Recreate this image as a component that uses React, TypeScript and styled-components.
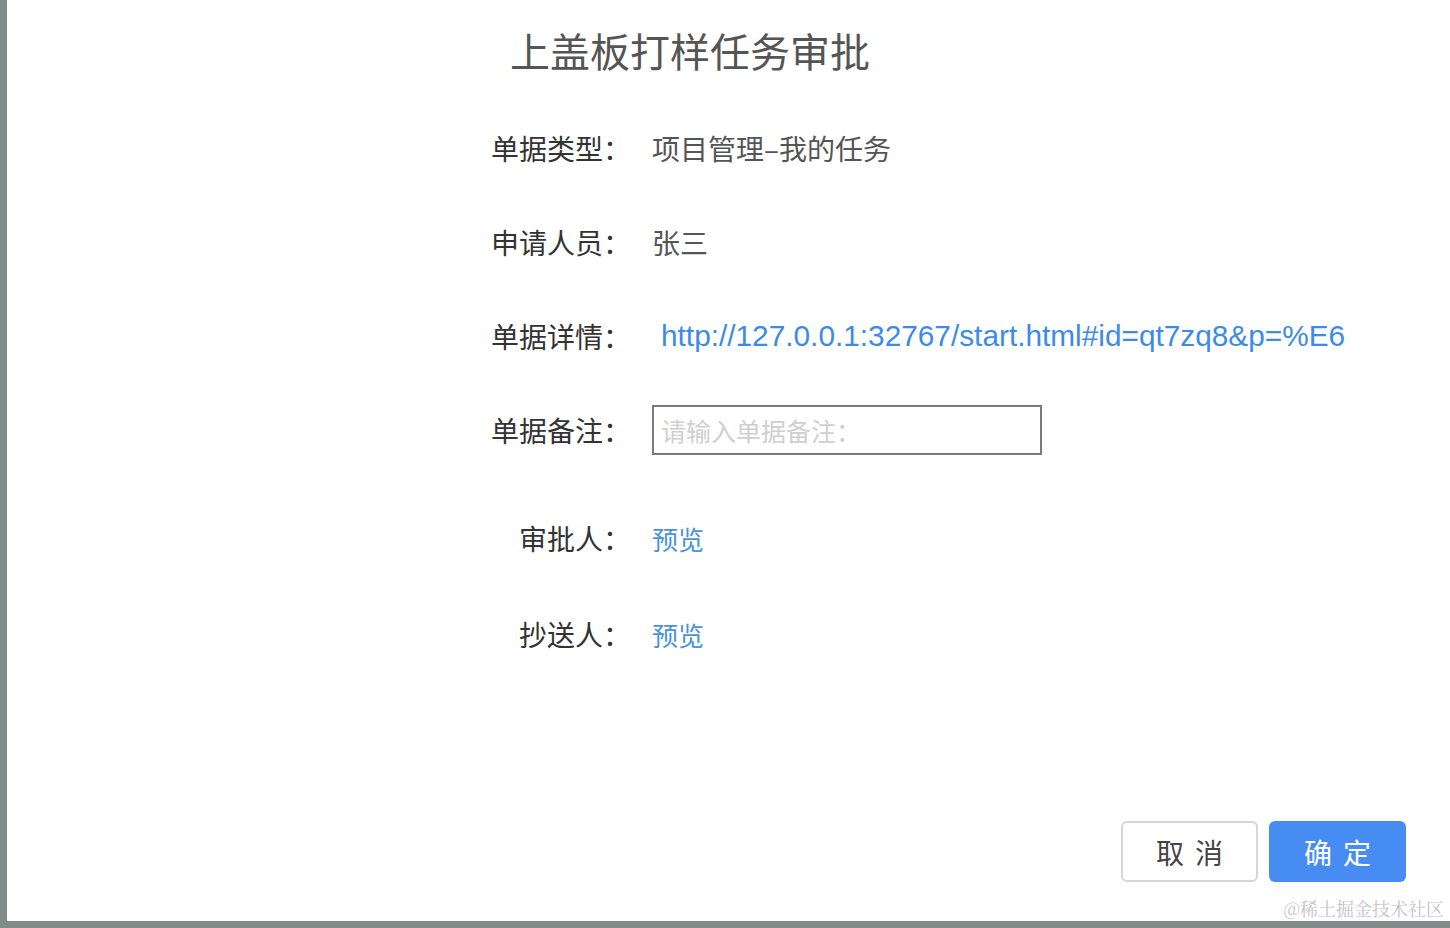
import styled, { createGlobalStyle } from "styled-components";

const GlobalStyle = createGlobalStyle`
  html, body {
    margin: 0;
    padding: 0;
    background: #808d8b;
    font-family: "Liberation Sans", "Noto Sans CJK SC", sans-serif;
  }
`;

const Screen = styled.div`
  position: relative;
  width: 1450px;
  height: 928px;
  padding: 0 0 7px 7px;
  box-sizing: border-box;
  overflow: hidden;
`;

const Panel = styled.div`
  height: 921px;
  background: #ffffff;
  display: flex;
  flex-direction: column;
`;

const Form = styled.div`
  margin-left: 473px;
  display: flex;
  flex-direction: column;
`;

const Title = styled.h1`
  margin: 20px 0 44px 30px;
  height: 60px;
  line-height: 60px;
  font-size: 40px;
  font-weight: 400;
  color: #555555;
  font-family: "Noto Sans CJK SC", sans-serif;
`;

const Rows = styled.div`
  display: grid;
  grid-template-columns: 151px 1fr;
  column-gap: 21px;
  row-gap: 46px;
`;

const Label = styled.div<{ $gapBelow?: number }>`
  height: 48px;
  display: flex;
  align-items: center;
  justify-content: flex-end;
  font-size: 28px;
  color: #333333;
  font-family: "Noto Sans CJK SC", sans-serif;
  margin-bottom: ${(p) => p.$gapBelow ?? 0}px;
`;

const Value = styled.div<{ $gapBelow?: number }>`
  height: 48px;
  display: flex;
  align-items: center;
  font-size: 28px;
  color: #555555;
  font-family: "Noto Sans CJK SC", sans-serif;
  margin-bottom: ${(p) => p.$gapBelow ?? 0}px;
`;

const Link = styled.a`
  margin-left: 9px;
  font-size: 29.8px;
  color: #3d8be8;
  text-decoration: none;
  font-family: "Liberation Sans", "Noto Sans CJK SC", sans-serif;
  white-space: nowrap;
`;

const Preview = styled.a`
  font-size: 26px;
  color: #4a93d6;
  text-decoration: none;
  font-family: "Noto Sans CJK SC", sans-serif;
`;

const NoteInput = styled.input`
  width: 390px;
  height: 50px;
  box-sizing: border-box;
  border: 2px solid #7a7a7a;
  padding: 0 7px;
  font-size: 25px;
  color: #333;
  font-family: "Noto Sans CJK SC", sans-serif;
  outline: none;
  &::placeholder {
    color: #cfcfcf;
  }
`;

const Footer = styled.div`
  margin-top: auto;
  display: flex;
  justify-content: flex-end;
  gap: 11px;
  padding: 0 44px 39px 0;
`;

const Button = styled.button<{ $primary?: boolean }>`
  width: 137px;
  height: 61px;
  border-radius: 6px;
  box-sizing: border-box;
  border: ${(p) => (p.$primary ? "none" : "2px solid #d6d6d6")};
  background: ${(p) => (p.$primary ? "#468cf2" : "#ffffff")};
  color: ${(p) => (p.$primary ? "#ffffff" : "#444444")};
  font-size: 28px;
  letter-spacing: 11px;
  padding-left: 17px;
  font-family: "Noto Sans CJK SC", sans-serif;
`;

const Watermark = styled.div`
  position: absolute;
  right: 6px;
  bottom: 7px;
  font-size: 18px;
  color: #c4c4c4;
  font-family: "Noto Serif CJK SC", "Liberation Serif", serif;
`;

export default function App() {
  return (
    <Screen>
      <GlobalStyle />
      <Panel>
        <Form>
          <Title>上盖板打样任务审批</Title>
          <Rows>
            <Label>单据类型：</Label>
            <Value>项目管理–我的任务</Value>
            <Label>申请人员：</Label>
            <Value>张三</Value>
            <Label>单据详情：</Label>
            <Value>
              <Link href="#">http://127.0.0.1:32767/start.html#id=qt7zq8&amp;p=%E6</Link>
            </Value>
            <Label $gapBelow={14}>单据备注：</Label>
            <Value $gapBelow={14}>
              <NoteInput placeholder="请输入单据备注：" />
            </Value>
            <Label $gapBelow={2}>审批人：</Label>
            <Value $gapBelow={2}>
              <Preview href="#">预览</Preview>
            </Value>
            <Label>抄送人：</Label>
            <Value>
              <Preview href="#">预览</Preview>
            </Value>
          </Rows>
        </Form>
        <Footer>
          <Button>取消</Button>
          <Button $primary>确定</Button>
        </Footer>
      </Panel>
      <Watermark>@稀土掘金技术社区</Watermark>
    </Screen>
  );
}
